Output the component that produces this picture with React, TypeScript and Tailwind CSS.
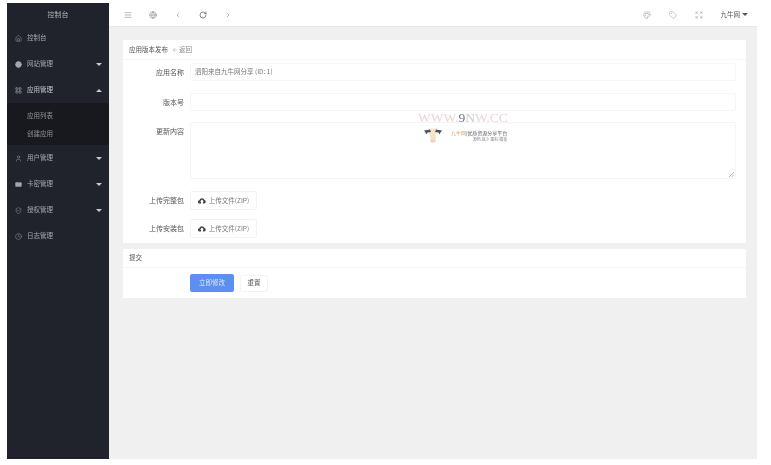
import {
  House,
  Globe,
  LayoutGrid,
  User,
  CreditCard,
  ShieldCheck,
  Clock,
  AlignJustify,
  ChevronLeft,
  ChevronRight,
  RotateCw,
  Palette,
  Tag,
  Expand,
  ArrowLeft,
} from 'lucide-react';

const font = "font-['Noto_Sans_CJK_SC','Liberation_Sans',sans-serif]";

function Caret({ up = false }: { up?: boolean }) {
  return (
    <span
      className={`h-0 w-0 border-x-[3px] border-x-transparent ${
        up ? 'border-b-[3px] border-b-[#c8cacd]' : 'border-t-[3px] border-t-[#c8cacd]'
      }`}
    />
  );
}

function NavItem({
  icon: Icon,
  label,
  caret,
  up,
  solid,
  active,
}: {
  icon: typeof House;
  label: string;
  caret?: boolean;
  up?: boolean;
  solid?: boolean;
  active?: boolean;
}) {
  return (
    <div
      className={`flex h-[26px] items-center pl-[8px] pr-[7px] ${active ? 'text-[#c4c7ca]' : 'text-[#a4a8ad]'}`}
    >
      <Icon size={7} strokeWidth={1.5} fill={solid ? 'currentColor' : 'none'} className="shrink-0" />
      <span className="ml-[5px] flex-1 text-[6.5px]">{label}</span>
      {caret && <Caret up={up} />}
    </div>
  );
}

function FormRow({
  label,
  children,
  className,
}: {
  label: string;
  children: React.ReactNode;
  className?: string;
}) {
  return (
    <div className={`flex items-start ${className ?? ''}`}>
      <label className="w-[61px] pt-[5px] text-right text-[7px] leading-[9px] text-[#555]">{label}</label>
      <div className="ml-[6px] mr-[10px] flex-1">{children}</div>
    </div>
  );
}

function UploadButton({ label }: { label: string }) {
  return (
    <button className="flex h-[19px] w-[67px] items-center justify-center gap-[3px] rounded-[2px] border border-[#f3f3f3] bg-white text-[6.5px] text-[#777]">
      <svg width="8" height="7" viewBox="0 0 8 7" className="shrink-0">
        <path
          d="M2 6.5 H1.6 A1.6 1.6 0 0 1 1.4 3.3 A2.7 2.7 0 0 1 6.5 3 A1.8 1.8 0 0 1 6.3 6.5 H5 V4.6 H6 L4 2.6 L2 4.6 H3 V6.5 Z"
          fill="#444"
        />
      </svg>
      {label}
    </button>
  );
}

function CowLogo() {
  return (
    <svg width="18" height="17" viewBox="0 0 18 17" className="shrink-0">
      <path d="M5 1 Q9 2.5 13 1 L12.5 7 Q12 11 11.5 14 Q9 16.5 6.5 14 Q6 11 5.5 7 Z" fill="#f3e6c8" />
      <path d="M0 3.5 L6 2.5 L7 5 L3.5 5.5 L2.5 7.5 L1.5 5.5 Z" fill="#4a5260" />
      <path d="M18 3.5 L12 2.5 L11 5 L14.5 5.5 L15.5 7.5 L16.5 5.5 Z" fill="#4a5260" />
      <ellipse cx="9" cy="14" rx="2.8" ry="1.5" fill="#eccfc4" />
    </svg>
  );
}

export default function App() {
  return (
    <div className={`h-[465px] w-[771px] overflow-hidden bg-white pl-[7px] pt-[3px] blur-[0.5px] ${font}`}>
      <div className="flex h-[456px] w-[750px] bg-[#f0f0f0]">
        <aside className="w-[102px] shrink-0 bg-[#20232b]">
          <div className="flex h-[22px] items-center justify-center text-[7px] text-[#b0b3b7]">控制台</div>
          <NavItem icon={House} label="控制台" />
          <NavItem icon={Globe} label="网站管理" caret solid />
          <NavItem icon={LayoutGrid} label="应用管理" caret up active />
          <div className="flex h-[42px] flex-col justify-center gap-[9px] bg-[#17191f] pl-[20px] text-[6.5px] leading-[9px] text-[#8e9297]">
            <span>应用列表</span>
            <span>创建应用</span>
          </div>
          <NavItem icon={User} label="用户管理" caret />
          <NavItem icon={CreditCard} label="卡密管理" caret solid />
          <NavItem icon={ShieldCheck} label="授权管理" caret />
          <NavItem icon={Clock} label="日志管理" />
        </aside>

        <div className="flex min-w-0 flex-1 flex-col">
          <header className="flex h-[23px] items-center bg-white pl-[15px] pr-[9px] text-[#777] shadow-[0_1px_1px_rgba(0,0,0,0.04)]">
            <AlignJustify size={8} strokeWidth={1.5} />
            <Globe size={8} strokeWidth={1.5} className="ml-[17px]" />
            <ChevronLeft size={8} strokeWidth={1.5} className="ml-[17px]" />
            <RotateCw size={8} strokeWidth={2} className="ml-[17px] text-[#555]" />
            <ChevronRight size={8} strokeWidth={1.5} className="ml-[17px]" />
            <div className="flex-1" />
            <Palette size={8} strokeWidth={1.5} className="text-[#999]" />
            <Tag size={8} strokeWidth={1.5} className="ml-[18px] text-[#999]" />
            <Expand size={8} strokeWidth={1.5} className="ml-[18px] text-[#999]" />
            <span className="ml-[18px] text-[6.5px] text-[#555]">九牛网</span>
            <span className="ml-[2px] h-0 w-0 border-x-[3px] border-t-[3px] border-x-transparent border-t-[#555]" />
          </header>

          <main className="flex flex-col gap-[6px] pl-[14px] pr-[11px] pt-[14px]">
            <section className="relative h-[203px] bg-white">
              <div className="flex h-[20px] items-center border-b border-[#f6f6f6] pl-[6px] text-[6.5px] text-[#555]">
                应用版本发布
                <span className="ml-[4px] flex items-center gap-[1px] text-[#888]">
                  <ArrowLeft size={6} strokeWidth={1.5} />
                  返回
                </span>
              </div>
              <div className="flex flex-col pt-[3px]">
                <FormRow label="应用名称">
                  <div className="flex h-[18px] items-center rounded-[2px] border border-[#f6f6f6] pl-[4px] text-[6.5px] text-[#777]">
                    泗阳来自九牛网分享 (ID: 1)
                  </div>
                </FormRow>
                <FormRow label="版本号" className="mt-[12px]">
                  <div className="h-[18px] rounded-[2px] border border-[#f6f6f6]" />
                </FormRow>
                <FormRow label="更新内容" className="mt-[11px]">
                  <div className="relative h-[57px] rounded-[2px] border border-[#f4f4f4]">
                    <svg width="5" height="5" viewBox="0 0 5 5" className="absolute bottom-[1px] right-[1px]">
                      <path d="M0 5 L5 0 M2.5 5 L5 2.5" stroke="#888" strokeWidth="0.6" />
                    </svg>
                  </div>
                </FormRow>
                <FormRow label="上传完整包" className="mt-[12px]">
                  <UploadButton label="上传文件(ZIP)" />
                </FormRow>
                <FormRow label="上传安装包" className="mt-[9px]">
                  <UploadButton label="上传文件(ZIP)" />
                </FormRow>
              </div>

              {/* site watermark sits over the form */}
              <div className="absolute left-[295px] top-[71px] w-[94px]">
                <div className="whitespace-nowrap font-['Liberation_Serif',serif] text-[13.5px] leading-[14px] text-[#efd3d6]">
                  WWW.<span className="text-[#6d7287]">9</span>
                  <span className="text-[#cfc6d2]">N</span>W.CC
                </div>
                <div className="flex items-center pl-[6px] pt-[2px]">
                  <CowLogo />
                  <div className="ml-[9px] text-right">
                    <div className="whitespace-nowrap text-[5px] leading-[7px] text-[#666]">
                      <span className="text-[#d9a36f]">九牛网</span>|优质资源分享平台
                    </div>
                    <div className="text-[4px] leading-[6px] text-[#888]">源码 减少 图标 模板</div>
                  </div>
                </div>
              </div>
            </section>

            <section className="h-[49px] bg-white">
              <div className="flex h-[19px] items-center border-b border-[#f6f6f6] pl-[6px] text-[6.5px] text-[#555]">提交</div>
              <div className="flex items-center gap-[6px] pl-[67px] pt-[6px]">
                <button className="h-[18px] w-[44px] rounded-[2px] bg-[#5b8ff0] text-[6.5px] text-[#dbe6fb]">
                  立即修改
                </button>
                <button className="h-[17px] w-[28px] rounded-[2px] border border-[#f3f3f3] bg-white text-[6.5px] text-[#555]">
                  重置
                </button>
              </div>
            </section>
          </main>
        </div>
      </div>
    </div>
  );
}
